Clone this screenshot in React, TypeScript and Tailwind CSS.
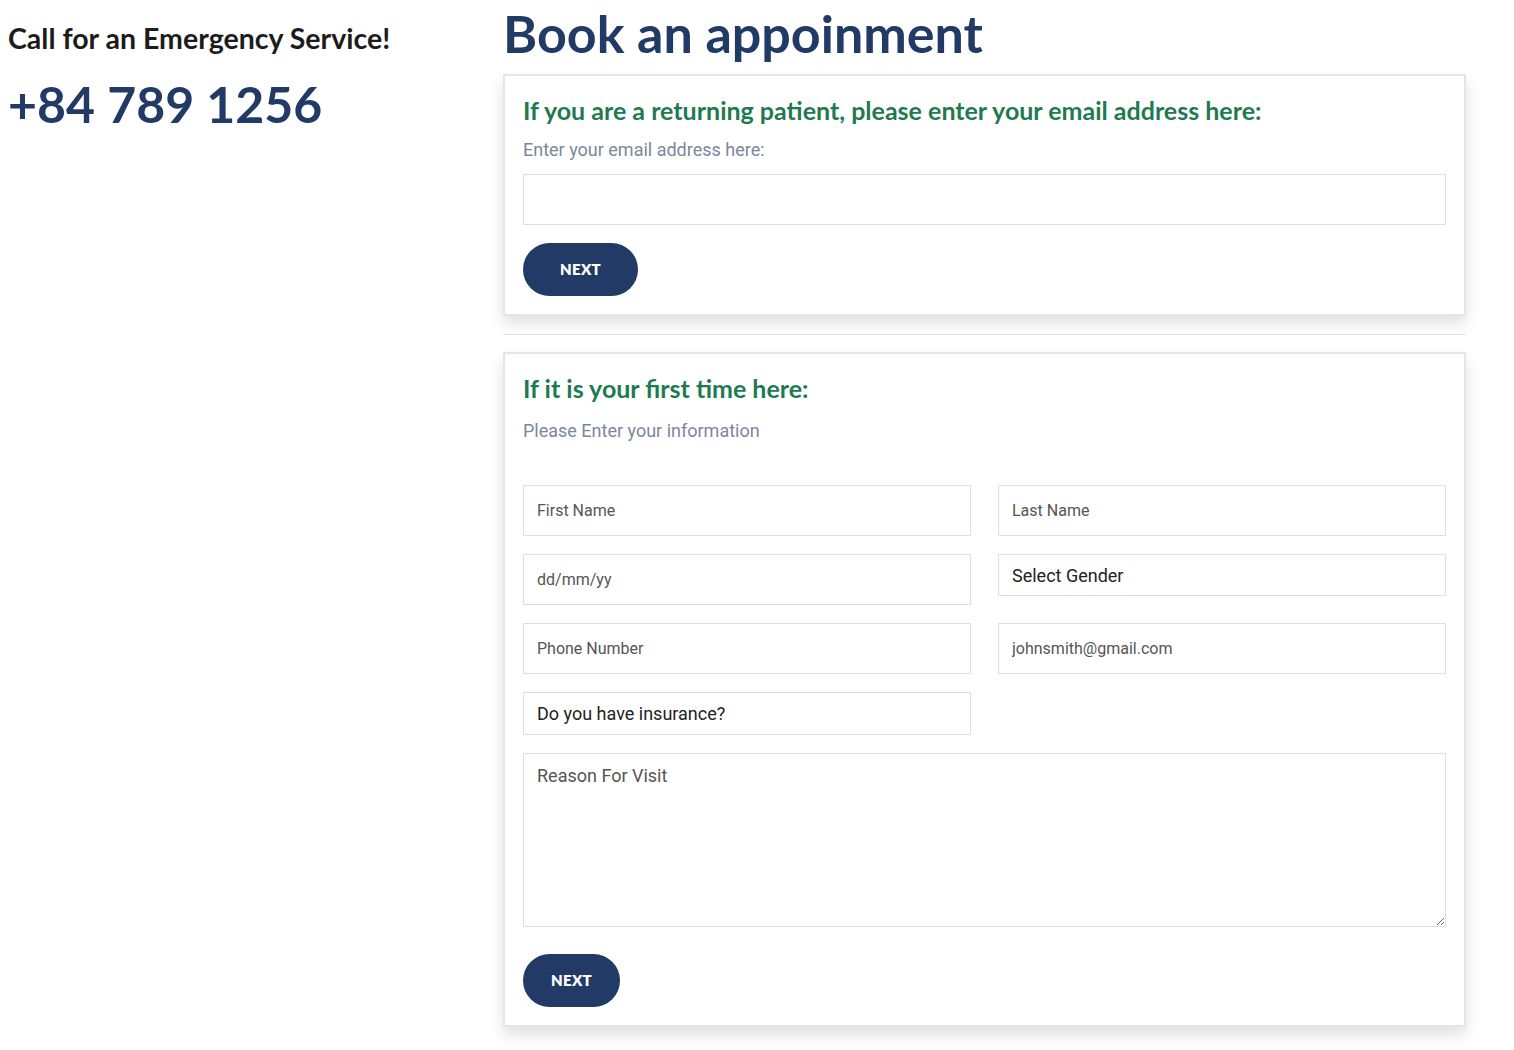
import React from "react";

const heading = { fontFamily: "Lato, 'Open Sans', sans-serif" } as React.CSSProperties;
const body = { fontFamily: "Roboto, 'Liberation Sans', sans-serif" } as React.CSSProperties;

function Field({ placeholder, className = "" }: { placeholder: string; className?: string }) {
  return (
    <input
      placeholder={placeholder}
      style={body}
      className={`h-[51px] w-full border border-[#dedfe2] bg-white px-[13px] text-[16px] text-[#333] outline-none placeholder:text-[#555] ${className}`}
    />
  );
}

function SelectBox({ label, h }: { label: string; h: string }) {
  return (
    <div
      style={body}
      className={`flex w-full items-center border border-[#dedfe2] bg-white px-[13px] text-[18px] text-[#222] ${h}`}
    >
      {label}
    </div>
  );
}

function NextButton({ w }: { w: string }) {
  return (
    <button
      style={heading}
      className={`flex h-[53px] ${w} items-center justify-center rounded-full bg-[#213a66] text-[15px] font-extrabold tracking-[0.3px] text-white`}
    >
      NEXT
    </button>
  );
}

export default function App() {
  return (
    <div className="flex min-h-[1050px] w-[1514px] bg-white">
      <div className="w-[503px] shrink-0 pl-[8px] pt-[18px]">
        <div style={heading} className="text-[28.5px] font-bold leading-[40px] text-[#1c1c1c]">
          Call for an Emergency Service!
        </div>
        <div style={heading} className="mt-[15px] text-[50px] font-bold leading-[62px] text-[#213a66]">
          +84 789 1256
        </div>
      </div>
      <div className="w-[963px] shrink-0">
        <h1 style={heading} className="pt-[2px] text-[52px] font-bold leading-[62px] text-[#213a66]">
          Book an appoinment
        </h1>
        <div className="mt-[10px] border-2 border-[#e3e5e9] bg-white px-[18px] pb-[18px] pt-[18px] shadow-[0_8px_14px_rgba(0,0,0,0.12)]">
          <h2 style={heading} className="text-[25px] font-bold leading-[32px] text-[#1f7a50]">
            If you are a returning patient, please enter your email address here:
          </h2>
          <div style={body} className="mt-[12px] text-[18px] leading-[24px] text-[#7b889c]">
            Enter your email address here:
          </div>
          <div className="mt-[12px]">
            <Field placeholder="" />
          </div>
          <div className="mt-[18px]">
            <NextButton w="w-[115px]" />
          </div>
        </div>
        <div className="mt-[18px] h-px bg-[#e2e4e8]" />
        <div className="mt-[17px] border-2 border-[#e3e5e9] bg-white px-[18px] pb-[18px] pt-[18px] shadow-[0_8px_14px_rgba(0,0,0,0.12)]">
          <h2 style={heading} className="text-[25px] font-bold leading-[32px] text-[#1f7a50]">
            If it is your first time here:
          </h2>
          <div style={body} className="mt-[15px] text-[18px] leading-[24px] text-[#7b889c]">
            Please Enter your information
          </div>
          <div className="mt-[42px] grid grid-cols-2 gap-x-[27px] gap-y-[18px]">
            <Field placeholder="First Name" />
            <Field placeholder="Last Name" />
            <Field placeholder="dd/mm/yy" />
            <SelectBox label="Select Gender" h="h-[42px]" />
            <Field placeholder="Phone Number" className="h-[50px]" />
            <Field placeholder="johnsmith@gmail.com" className="h-[50px]" />
            <SelectBox label="Do you have insurance?" h="h-[43px]" />
            <div />
          </div>
          <textarea
            placeholder="Reason For Visit"
            style={body}
            className="mt-[18px] block h-[174px] w-full border border-[#dedfe2] px-[13px] py-[8px] text-[18px] text-[#333] outline-none placeholder:text-[#555]"
          />
          <div className="mt-[27px]">
            <NextButton w="w-[97px]" />
          </div>
        </div>
      </div>
    </div>
  );
}
